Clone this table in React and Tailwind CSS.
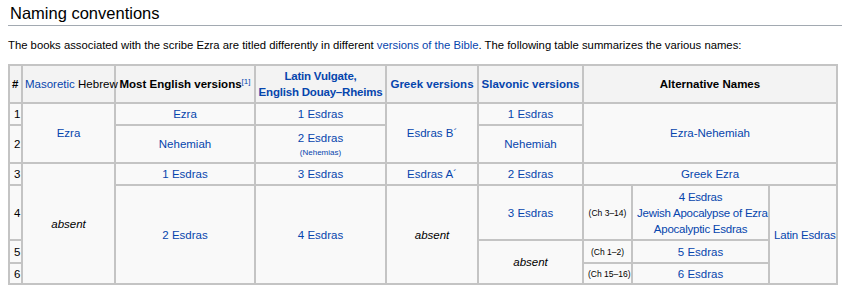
const link = "text-[#0645ad]";

function Cell({ children, className = "", ...rest }) {
  return (
    <td
      className={`border-2 border-[#c4c4c4] px-[4px] py-0 text-center align-middle ${className}`}
      {...rest}
    >
      {children}
    </td>
  );
}

function Head({ children, className = "", ...rest }) {
  return (
    <th
      className={`border-2 border-[#c4c4c4] bg-[#f3f3f3] px-[2px] py-0 text-center align-middle font-bold ${className}`}
      {...rest}
    >
      {children}
    </th>
  );
}

export default function App() {
  return (
    <div className="min-h-screen bg-white px-[8px] pt-[2px] text-[11.5px] text-[#202122] font-['Liberation_Sans',Arial,sans-serif]">
      <h2 className="border-b border-[#a2a9b1] pb-[1px] pl-[2px] text-[16.5px] leading-[22px] text-black">
        Naming conventions
      </h2>

      <p className="mt-[10px] text-[11.3px] leading-[18px] text-black">
        The books associated with the scribe Ezra are titled differently in different{" "}
        <span className={link}>versions of the Bible</span>. The following table summarizes the various names:
      </p>

      <table className="mt-[10px] w-[828px] table-fixed border-collapse bg-[#f9f9f9] text-black leading-[16px]">
        <colgroup>
          <col className="w-[13px]" />
          <col className="w-[93px]" />
          <col className="w-[140px]" />
          <col className="w-[131px]" />
          <col className="w-[92px]" />
          <col className="w-[105px]" />
          <col className="w-[49px]" />
          <col className="w-[137px]" />
          <col className="w-[68px]" />
        </colgroup>
        <thead>
          <tr className="h-[38px]">
            <Head className="px-[1px] text-left">#</Head>
            <Head className="whitespace-nowrap font-normal">
              <span className={link}>Masoretic</span> Hebrew
            </Head>
            <Head className="whitespace-nowrap">
              Most English versions
              <sup className={`${link} text-[8px] font-normal`}>[1]</sup>
            </Head>
            <Head className={`${link} whitespace-nowrap px-0 tracking-[-0.2px]`}>
              Latin Vulgate,
              <br />
              English Douay–Rheims
            </Head>
            <Head className={`${link} whitespace-nowrap`}>Greek versions</Head>
            <Head className={`${link} whitespace-nowrap`}>Slavonic versions</Head>
            <Head colSpan={3}>Alternative Names</Head>
          </tr>
        </thead>
        <tbody>
          <tr className="h-[22px]">
            <Cell className="px-[1px] text-left">1</Cell>
            <Cell rowSpan={2} className={link}>Ezra</Cell>
            <Cell className={link}>Ezra</Cell>
            <Cell className={link}>1 Esdras</Cell>
            <Cell rowSpan={2} className={link}>Esdras B´</Cell>
            <Cell className={link}>1 Esdras</Cell>
            <Cell rowSpan={2} colSpan={3} className={link}>Ezra-Nehemiah</Cell>
          </tr>
          <tr className="h-[38px]">
            <Cell className="px-[1px] text-left">2</Cell>
            <Cell className={link}>Nehemiah</Cell>
            <Cell>
              <div className={link}>2 Esdras</div>
              <div className={`${link} text-[8px] leading-[13px]`}>(Nehemias)</div>
            </Cell>
            <Cell className={link}>Nehemiah</Cell>
          </tr>
          <tr className="h-[22px]">
            <Cell className="px-[1px] text-left">3</Cell>
            <Cell rowSpan={4} className="italic">absent</Cell>
            <Cell className={link}>1 Esdras</Cell>
            <Cell className={link}>3 Esdras</Cell>
            <Cell className={link}>Esdras A´</Cell>
            <Cell className={link}>2 Esdras</Cell>
            <Cell colSpan={3} className={link}>Greek Ezra</Cell>
          </tr>
          <tr className="h-[55px]">
            <Cell className="px-[1px] text-left">4</Cell>
            <Cell rowSpan={3} className={link}>2 Esdras</Cell>
            <Cell rowSpan={3} className={link}>4 Esdras</Cell>
            <Cell rowSpan={3} className="italic">absent</Cell>
            <Cell className={link}>3 Esdras</Cell>
            <Cell className="whitespace-nowrap px-0 text-[8.5px]">(Ch 3–14)</Cell>
            <Cell className={`${link} whitespace-nowrap px-0 tracking-[-0.25px]`}>
              4 Esdras
              <br />
              Jewish Apocalypse of Ezra
              <br />
              Apocalyptic Esdras
            </Cell>
            <Cell rowSpan={3} className={`${link} whitespace-nowrap px-[1px] tracking-[-0.2px]`}>Latin Esdras</Cell>
          </tr>
          <tr className="h-[23px]">
            <Cell className="px-[1px] text-left">5</Cell>
            <Cell rowSpan={2} className="italic">absent</Cell>
            <Cell className="whitespace-nowrap px-0 text-[8.5px]">(Ch 1–2)</Cell>
            <Cell className={link}>5 Esdras</Cell>
          </tr>
          <tr className="h-[21px]">
            <Cell className="px-[1px] text-left">6</Cell>
            <Cell className="whitespace-nowrap px-0 text-[8.5px]">(Ch 15–16)</Cell>
            <Cell className={link}>6 Esdras</Cell>
          </tr>
        </tbody>
      </table>
    </div>
  );
}
